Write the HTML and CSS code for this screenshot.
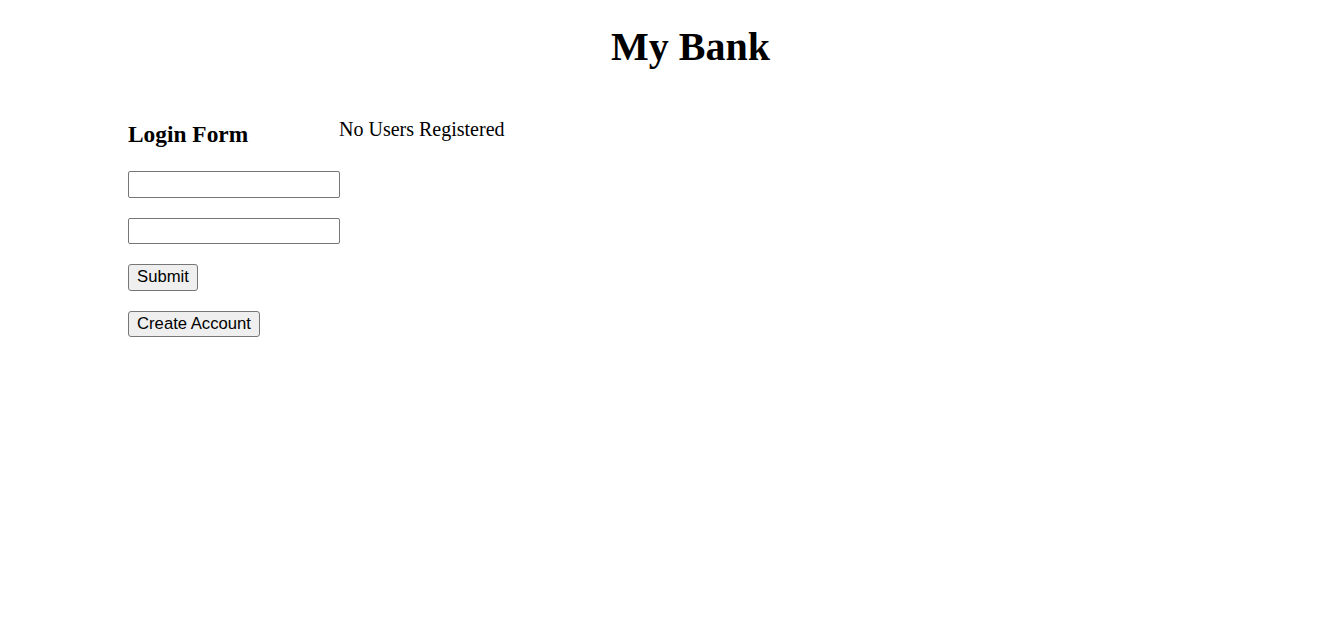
FILE: index.html
```html
<!DOCTYPE html>
<html lang="en">
<head>
<meta charset="utf-8">
<title>My Bank</title>
<link rel="stylesheet" href="styles.css">
</head>
<body>
<h1 class="title">My Bank</h1>
<main class="main">
  <form class="login">
    <h3 class="login-title">Login Form</h3>
    <input class="field field-user" type="text">
    <input class="field field-pass" type="password">
    <button class="btn btn-submit" type="button">Submit</button>
    <button class="btn btn-create" type="button">Create Account</button>
  </form>
  <p class="users">No Users Registered</p>
</main>
</body>
</html>
```
FILE: styles.css
```css
html, body {
  margin: 0;
  padding: 0;
  background: #ffffff;
  color: #000000;
  font-family: "Liberation Serif", "Times New Roman", serif;
}

.title {
  margin: 22.5px 0 31.5px;
  padding-left: 39px;
  text-align: center;
  font-size: 40px;
  font-weight: bold;
  line-height: normal;
}

.main {
  display: flex;
  flex-direction: row;
  align-items: flex-start;
  padding-left: 128px;
}

.login {
  display: flex;
  flex-direction: column;
  align-items: flex-start;
  width: 212px;
  margin: 0;
}

.login-title {
  margin: 20.4px 0 22.7px;
  font-size: 23.4px;
  font-weight: bold;
  line-height: normal;
}

.field {
  box-sizing: border-box;
  width: 212px;
  height: 27px;
  margin: 0 0 20px;
  padding: 0 3px;
  border: 1px solid #767676;
  border-radius: 2px;
  background: #ffffff;
  font-family: "Liberation Sans", Arial, sans-serif;
  font-size: 16.67px;
}

.field-pass {
  height: 26px;
}

.btn {
  box-sizing: border-box;
  height: 27px;
  margin: 0 0 20px;
  padding: 0;
  border: 1px solid #767676;
  border-radius: 3px;
  background: #efefef;
  color: #000000;
  font-family: "Liberation Sans", Arial, sans-serif;
  font-size: 16.67px;
  line-height: 1;
  text-align: center;
}

.btn-submit {
  width: 70px;
}

.btn-create {
  width: 132px;
  height: 26px;
}

.users {
  margin: 17.3px 0 0 -1px;
  font-size: 20px;
  line-height: normal;
}
```
